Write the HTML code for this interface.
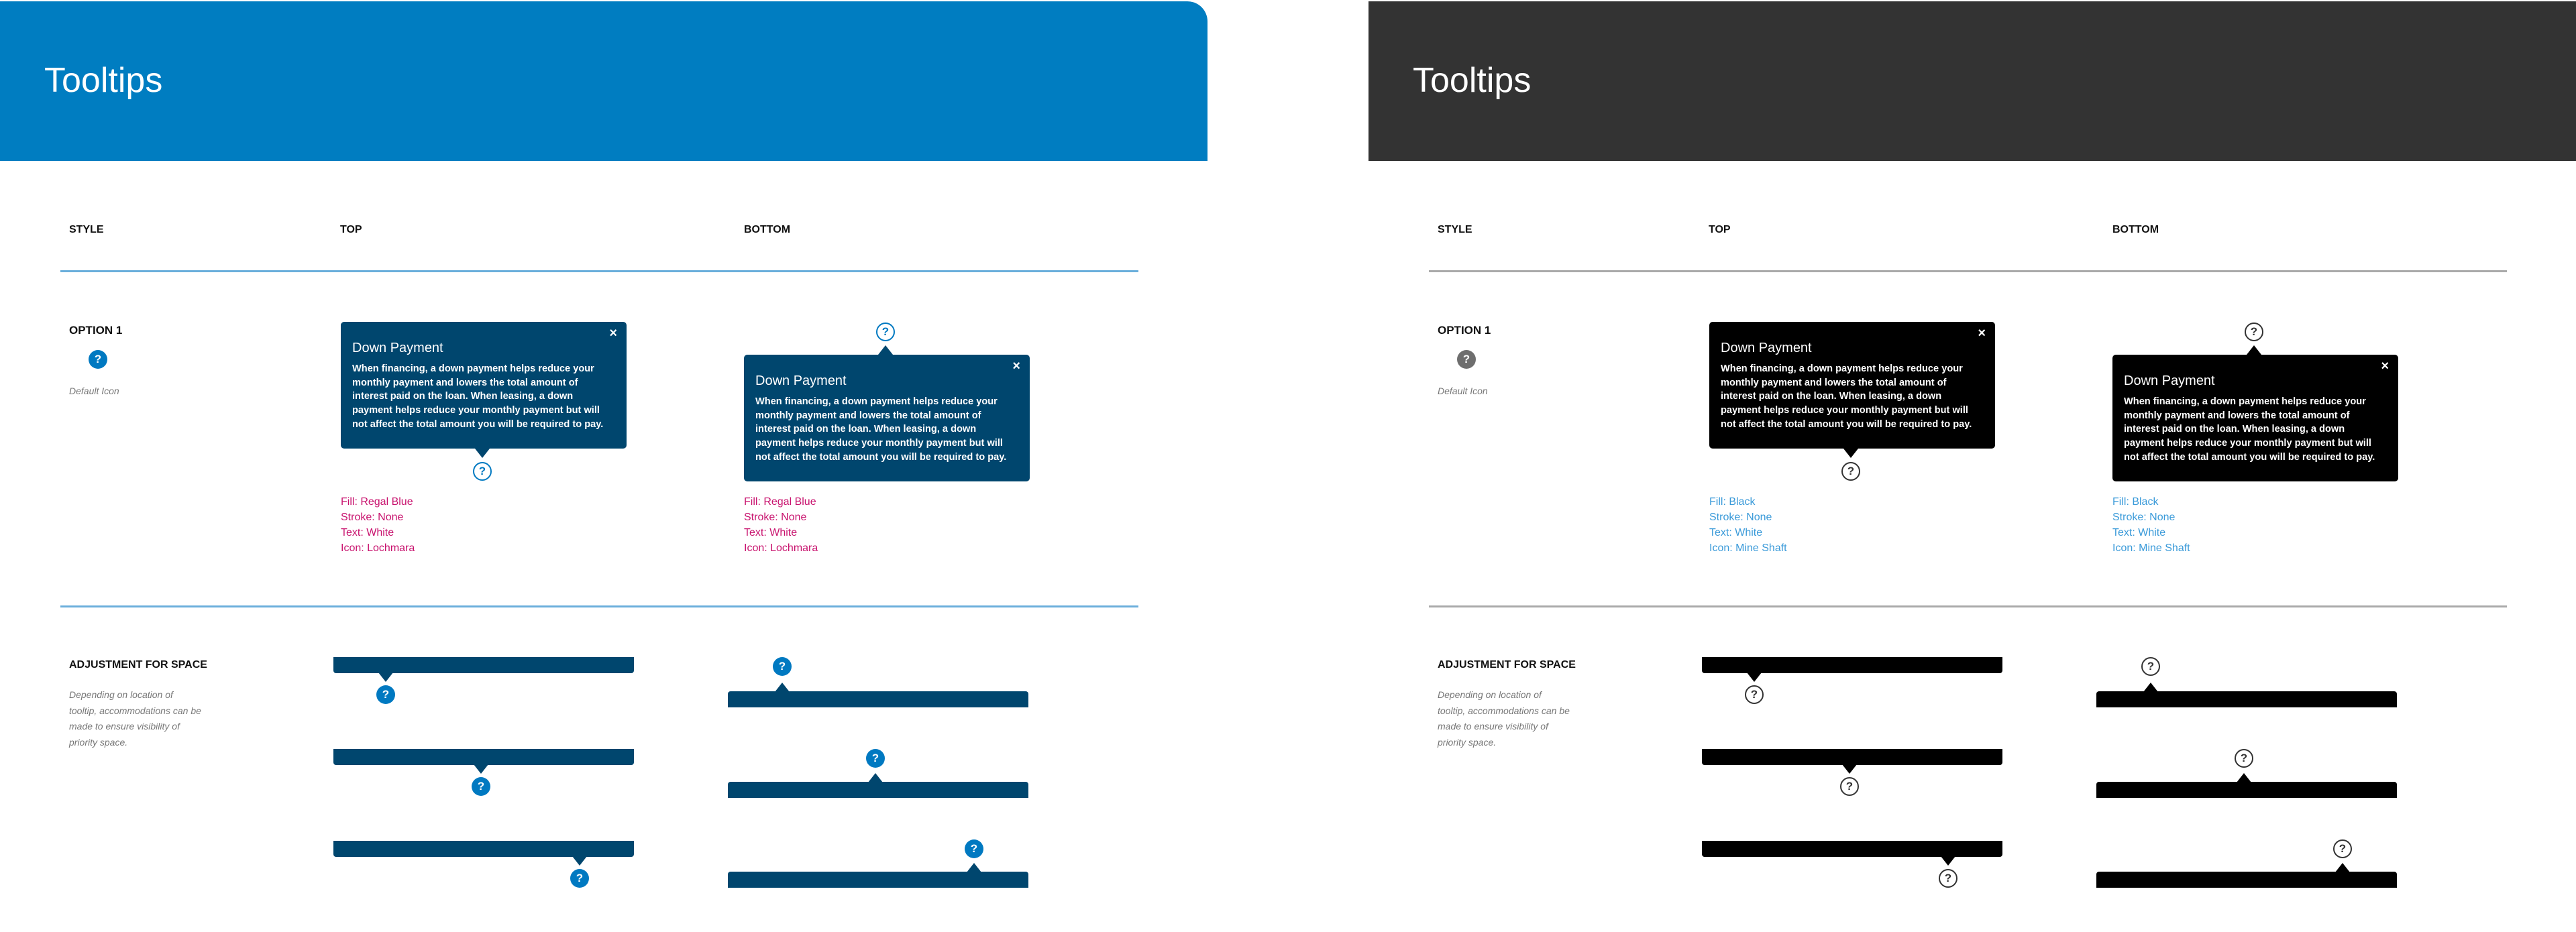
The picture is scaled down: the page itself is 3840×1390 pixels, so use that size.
<!DOCTYPE html>
<html><head><meta charset="utf-8"><style>
*{margin:0;padding:0;box-sizing:border-box}
body{width:3840px;height:1390px;background:#fff;position:relative;overflow:hidden;font-family:"Liberation Sans",sans-serif}
.p{position:absolute;top:0;width:1800px;height:1390px}
.hdr{position:absolute;left:0;top:2px;width:1800px;height:238px}
.blue .hdr{background:#007dc1;border-top-right-radius:30px}
.dark .hdr{background:#333}
.hdr span{position:absolute;left:66px;top:88px;font-size:52px;color:#fff}
.a{position:absolute;white-space:nowrap}
.h{font-size:16px;font-weight:bold;color:#111}
.line{position:absolute;left:90px;width:1607px;height:3px}
.blue .line{background:#6aaedb}
.dark .line{background:#a9a9a9}
.tt{position:absolute;width:426px;height:189px;border-radius:5px;color:#fff}
.blue .tt,.blue .bar{background:#00466e}
.dark .tt,.dark .bar{background:#000}
.tt .t{position:absolute;left:17px;top:28px;font-size:20px}
.tt .x{position:absolute;right:14px;top:6px;font-size:20px;font-weight:bold}
.tt .b{position:absolute;left:17px;top:60px;font-size:14.6px;line-height:20.7px;font-weight:bold;white-space:nowrap}
.dn,.up{position:absolute;width:0;height:0;border-left:11px solid transparent;border-right:11px solid transparent}
.blue .dn{border-top:14px solid #00466e}.dark .dn{border-top:14px solid #000}
.blue .up{border-bottom:14px solid #00466e}.dark .up{border-bottom:14px solid #000}
.ic{position:absolute;width:28px;height:28px;border-radius:50%;text-align:center;line-height:27px;font-size:17px;font-weight:bold}
.blue .ic{background:#0079c1;color:#fff}
.dark .ic{background:#fff;border:2px solid #333;color:#333;line-height:24px}
.blue .ic.o{background:#fff;border:2px solid #0079c1;color:#0079c1;line-height:24px}
.dark .ic.def{background:#6e6e6e;border:none;color:#fff;line-height:27px}
.spec{position:absolute;font-size:16px;line-height:23px}
.blue .spec{color:#c8116d}.dark .spec{color:#3a9ad9}
.it{font-style:italic;color:#777;font-size:14px;line-height:23.5px}
.bar{position:absolute;height:24px;width:448px;border-radius:0 0 4px 4px}
.bar.r{border-radius:4px 4px 0 0}
</style></head><body>

<div class="p blue" style="left:0">
<div class="hdr"><span>Tooltips</span></div>
<div class="a h" style="left:103px;top:334px">STYLE</div>
<div class="a h" style="left:507px;top:334px">TOP</div>
<div class="a h" style="left:1109px;top:334px">BOTTOM</div>
<div class="line" style="top:403px"></div>
<div class="a h" style="left:103px;top:483px;font-size:17px">OPTION 1</div>
<div class="ic def" style="left:132px;top:522px">?</div>
<div class="a it" style="left:103px;top:572px">Default Icon</div>
<div class="tt" style="left:508px;top:480px"><div class="x">×</div><div class="t">Down Payment</div><div class="b">When financing, a down payment helps reduce your<br>monthly payment and lowers the total amount of<br>interest paid on the loan. When leasing, a down<br>payment helps reduce your monthly payment but will<br>not affect the total amount you will be required to pay.</div></div>
<div class="dn" style="left:708px;top:669px"></div>
<div class="ic o" style="left:705px;top:689px">?</div>
<div class="spec" style="left:508px;top:737px">Fill: Regal Blue<br>Stroke: None<br>Text: White<br>Icon: Lochmara</div>
<div class="ic o" style="left:1306px;top:481px">?</div>
<div class="up" style="left:1309px;top:515px"></div>
<div class="tt" style="left:1109px;top:529px"><div class="x">×</div><div class="t">Down Payment</div><div class="b">When financing, a down payment helps reduce your<br>monthly payment and lowers the total amount of<br>interest paid on the loan. When leasing, a down<br>payment helps reduce your monthly payment but will<br>not affect the total amount you will be required to pay.</div></div>
<div class="spec" style="left:1109px;top:737px">Fill: Regal Blue<br>Stroke: None<br>Text: White<br>Icon: Lochmara</div>
<div class="line" style="top:903px"></div>
<div class="a h" style="left:103px;top:983px">ADJUSTMENT FOR SPACE</div>
<div class="a it" style="left:103px;top:1025px">Depending on location of<br>tooltip, accommodations can be<br>made to ensure visibility of<br>priority space.</div>
<div class="bar" style="left:497px;top:980px"></div><div class="dn" style="left:564px;top:1003px"></div><div class="ic" style="left:561px;top:1022px">?</div>
<div class="bar" style="left:497px;top:1117px"></div><div class="dn" style="left:706px;top:1140px"></div><div class="ic" style="left:703px;top:1159px">?</div>
<div class="bar" style="left:497px;top:1254px"></div><div class="dn" style="left:853px;top:1277px"></div><div class="ic" style="left:850px;top:1296px">?</div>
<div class="ic" style="left:1152px;top:980px">?</div><div class="up" style="left:1155px;top:1018px"></div><div class="bar r" style="left:1085px;top:1031px"></div>
<div class="ic" style="left:1291px;top:1117px">?</div><div class="up" style="left:1294px;top:1153px"></div><div class="bar r" style="left:1085px;top:1166px"></div>
<div class="ic" style="left:1438px;top:1252px">?</div><div class="up" style="left:1441px;top:1287px"></div><div class="bar r" style="left:1085px;top:1300px"></div>
</div>

<div class="p dark" style="left:2040px">
<div class="hdr"><span>Tooltips</span></div>
<div class="a h" style="left:103px;top:334px">STYLE</div>
<div class="a h" style="left:507px;top:334px">TOP</div>
<div class="a h" style="left:1109px;top:334px">BOTTOM</div>
<div class="line" style="top:403px"></div>
<div class="a h" style="left:103px;top:483px;font-size:17px">OPTION 1</div>
<div class="ic def" style="left:132px;top:522px">?</div>
<div class="a it" style="left:103px;top:572px">Default Icon</div>
<div class="tt" style="left:508px;top:480px"><div class="x">×</div><div class="t">Down Payment</div><div class="b">When financing, a down payment helps reduce your<br>monthly payment and lowers the total amount of<br>interest paid on the loan. When leasing, a down<br>payment helps reduce your monthly payment but will<br>not affect the total amount you will be required to pay.</div></div>
<div class="dn" style="left:708px;top:669px"></div>
<div class="ic" style="left:705px;top:689px">?</div>
<div class="spec" style="left:508px;top:737px">Fill: Black<br>Stroke: None<br>Text: White<br>Icon: Mine Shaft</div>
<div class="ic" style="left:1306px;top:481px">?</div>
<div class="up" style="left:1309px;top:515px"></div>
<div class="tt" style="left:1109px;top:529px"><div class="x">×</div><div class="t">Down Payment</div><div class="b">When financing, a down payment helps reduce your<br>monthly payment and lowers the total amount of<br>interest paid on the loan. When leasing, a down<br>payment helps reduce your monthly payment but will<br>not affect the total amount you will be required to pay.</div></div>
<div class="spec" style="left:1109px;top:737px">Fill: Black<br>Stroke: None<br>Text: White<br>Icon: Mine Shaft</div>
<div class="line" style="top:903px"></div>
<div class="a h" style="left:103px;top:983px">ADJUSTMENT FOR SPACE</div>
<div class="a it" style="left:103px;top:1025px">Depending on location of<br>tooltip, accommodations can be<br>made to ensure visibility of<br>priority space.</div>
<div class="bar" style="left:497px;top:980px"></div><div class="dn" style="left:564px;top:1003px"></div><div class="ic" style="left:561px;top:1022px">?</div>
<div class="bar" style="left:497px;top:1117px"></div><div class="dn" style="left:706px;top:1140px"></div><div class="ic" style="left:703px;top:1159px">?</div>
<div class="bar" style="left:497px;top:1254px"></div><div class="dn" style="left:853px;top:1277px"></div><div class="ic" style="left:850px;top:1296px">?</div>
<div class="ic" style="left:1152px;top:980px">?</div><div class="up" style="left:1155px;top:1018px"></div><div class="bar r" style="left:1085px;top:1031px"></div>
<div class="ic" style="left:1291px;top:1117px">?</div><div class="up" style="left:1294px;top:1153px"></div><div class="bar r" style="left:1085px;top:1166px"></div>
<div class="ic" style="left:1438px;top:1252px">?</div><div class="up" style="left:1441px;top:1287px"></div><div class="bar r" style="left:1085px;top:1300px"></div>
</div>
</body></html>
